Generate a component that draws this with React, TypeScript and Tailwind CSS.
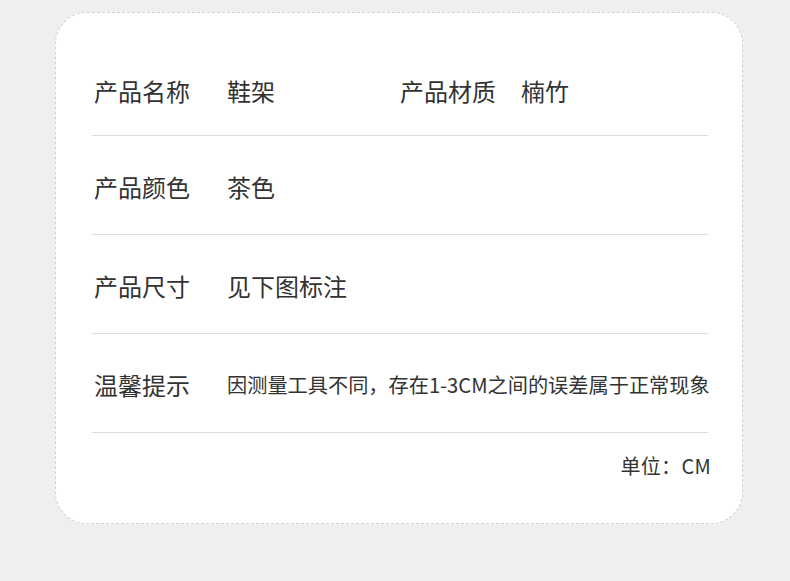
const font = { fontFamily: '"Noto Sans CJK SC", "Noto Sans", sans-serif' }

function Row({ children, first }: { children: React.ReactNode; first?: boolean }) {
  return (
    <div className={`flex h-[99px] items-center border-b border-[#dcdcdc] ${first ? 'pt-[10px]' : 'pt-[4px]'}`}>
      {children}
    </div>
  )
}

function Label({ text }: { text: string }) {
  return <span className="ml-[2px] w-[133px] shrink-0 text-[24px]">{text}</span>
}

export default function App() {
  return (
    <div className="w-[790px] h-[581px] bg-[#efefef] pt-[12px]" style={font}>
      <div className="ml-[55px] w-[688px] h-[512px] rounded-[32px] border border-dashed border-[#d6cec6] bg-white pt-[24px] pl-[36px] pr-[34px] text-[#333]">
        <Row first>
          <Label text="产品名称" />
          <span className="w-[173px] shrink-0 text-[24px]">鞋架</span>
          <span className="w-[121px] shrink-0 text-[24px]">产品材质</span>
          <span className="text-[24px]">楠竹</span>
        </Row>
        <Row>
          <Label text="产品颜色" />
          <span className="text-[24px]">茶色</span>
        </Row>
        <Row>
          <Label text="产品尺寸" />
          <span className="text-[24px]">见下图标注</span>
        </Row>
        <Row>
          <Label text="温馨提示" />
          <span className="text-[20.2px] whitespace-nowrap">因测量工具不同，存在1-3CM之间的误差属于正常现象</span>
        </Row>
        <div className="mt-[20px] -mr-[3px] flex justify-end text-[20px] leading-[26px] tracking-[0.3px]">单位：CM</div>
      </div>
    </div>
  )
}
